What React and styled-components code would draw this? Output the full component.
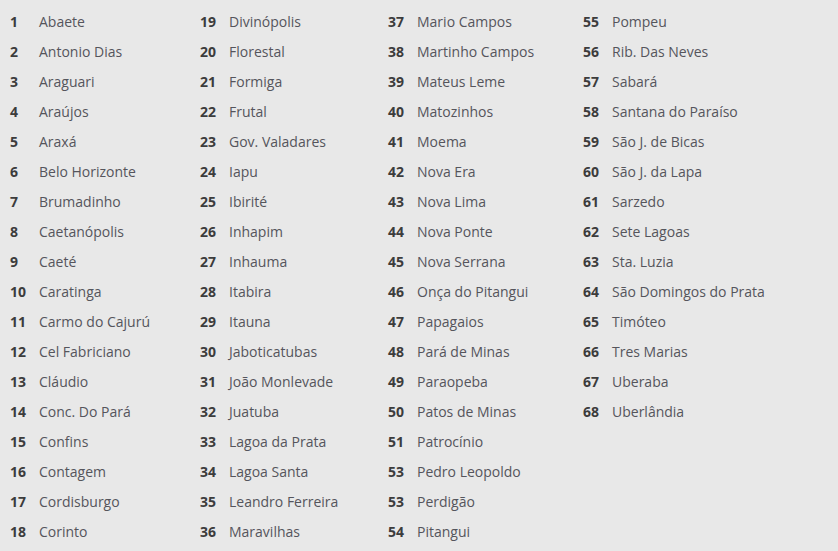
import React from "react";
import styled, { createGlobalStyle } from "styled-components";

const GlobalStyle = createGlobalStyle`
  html, body {
    margin: 0;
    padding: 0;
    background: #e8e8e8;
  }
  body {
    font-family: "Open Sans", "Liberation Sans", sans-serif;
  }
`;

const Page = styled.div`
  width: 838px;
  height: 551px;
  overflow: hidden;
  background: #e8e8e8;
  padding: 7px 0 0 10px;
  box-sizing: border-box;
  display: grid;
  grid-template-columns: 190px 188px 195px 1fr;
`;

const Column = styled.ul`
  list-style: none;
  margin: 0;
  padding: 0;
`;

const Item = styled.li`
  display: flex;
  height: 30px;
  line-height: 30px;
  font-size: 14px;
  white-space: nowrap;
`;

const Num = styled.span`
  width: 29px;
  flex: none;
  font-weight: 700;
  color: #3c3c3c;
`;

const Name = styled.span`
  color: #55555c;
`;

const columns = [
  [
    [1, "Abaete"], [2, "Antonio Dias"], [3, "Araguari"], [4, "Araújos"],
    [5, "Araxá"], [6, "Belo Horizonte"], [7, "Brumadinho"], [8, "Caetanópolis"],
    [9, "Caeté"], [10, "Caratinga"], [11, "Carmo do Cajurú"], [12, "Cel Fabriciano"],
    [13, "Cláudio"], [14, "Conc. Do Pará"], [15, "Confins"], [16, "Contagem"],
    [17, "Cordisburgo"], [18, "Corinto"],
  ],
  [
    [19, "Divinópolis"], [20, "Florestal"], [21, "Formiga"], [22, "Frutal"],
    [23, "Gov. Valadares"], [24, "Iapu"], [25, "Ibirité"], [26, "Inhapim"],
    [27, "Inhauma"], [28, "Itabira"], [29, "Itauna"], [30, "Jaboticatubas"],
    [31, "João Monlevade"], [32, "Juatuba"], [33, "Lagoa da Prata"], [34, "Lagoa Santa"],
    [35, "Leandro Ferreira"], [36, "Maravilhas"],
  ],
  [
    [37, "Mario Campos"], [38, "Martinho Campos"], [39, "Mateus Leme"], [40, "Matozinhos"],
    [41, "Moema"], [42, "Nova Era"], [43, "Nova Lima"], [44, "Nova Ponte"],
    [45, "Nova Serrana"], [46, "Onça do Pitangui"], [47, "Papagaios"], [48, "Pará de Minas"],
    [49, "Paraopeba"], [50, "Patos de Minas"], [51, "Patrocínio"], [53, "Pedro Leopoldo"],
    [53, "Perdigão"], [54, "Pitangui"],
  ],
  [
    [55, "Pompeu"], [56, "Rib. Das Neves"], [57, "Sabará"], [58, "Santana do Paraíso"],
    [59, "São J. de Bicas"], [60, "São J. da Lapa"], [61, "Sarzedo"], [62, "Sete Lagoas"],
    [63, "Sta. Luzia"], [64, "São Domingos do Prata"], [65, "Timóteo"], [66, "Tres Marias"],
    [67, "Uberaba"], [68, "Uberlândia"],
  ],
];

export default function App() {
  return (
    <>
      <GlobalStyle />
      <Page>
        {columns.map((col, ci) => (
          <Column key={ci}>
            {col.map(([n, name], i) => (
              <Item key={i}>
                <Num>{n}</Num>
                <Name>{name}</Name>
              </Item>
            ))}
          </Column>
        ))}
      </Page>
    </>
  );
}
